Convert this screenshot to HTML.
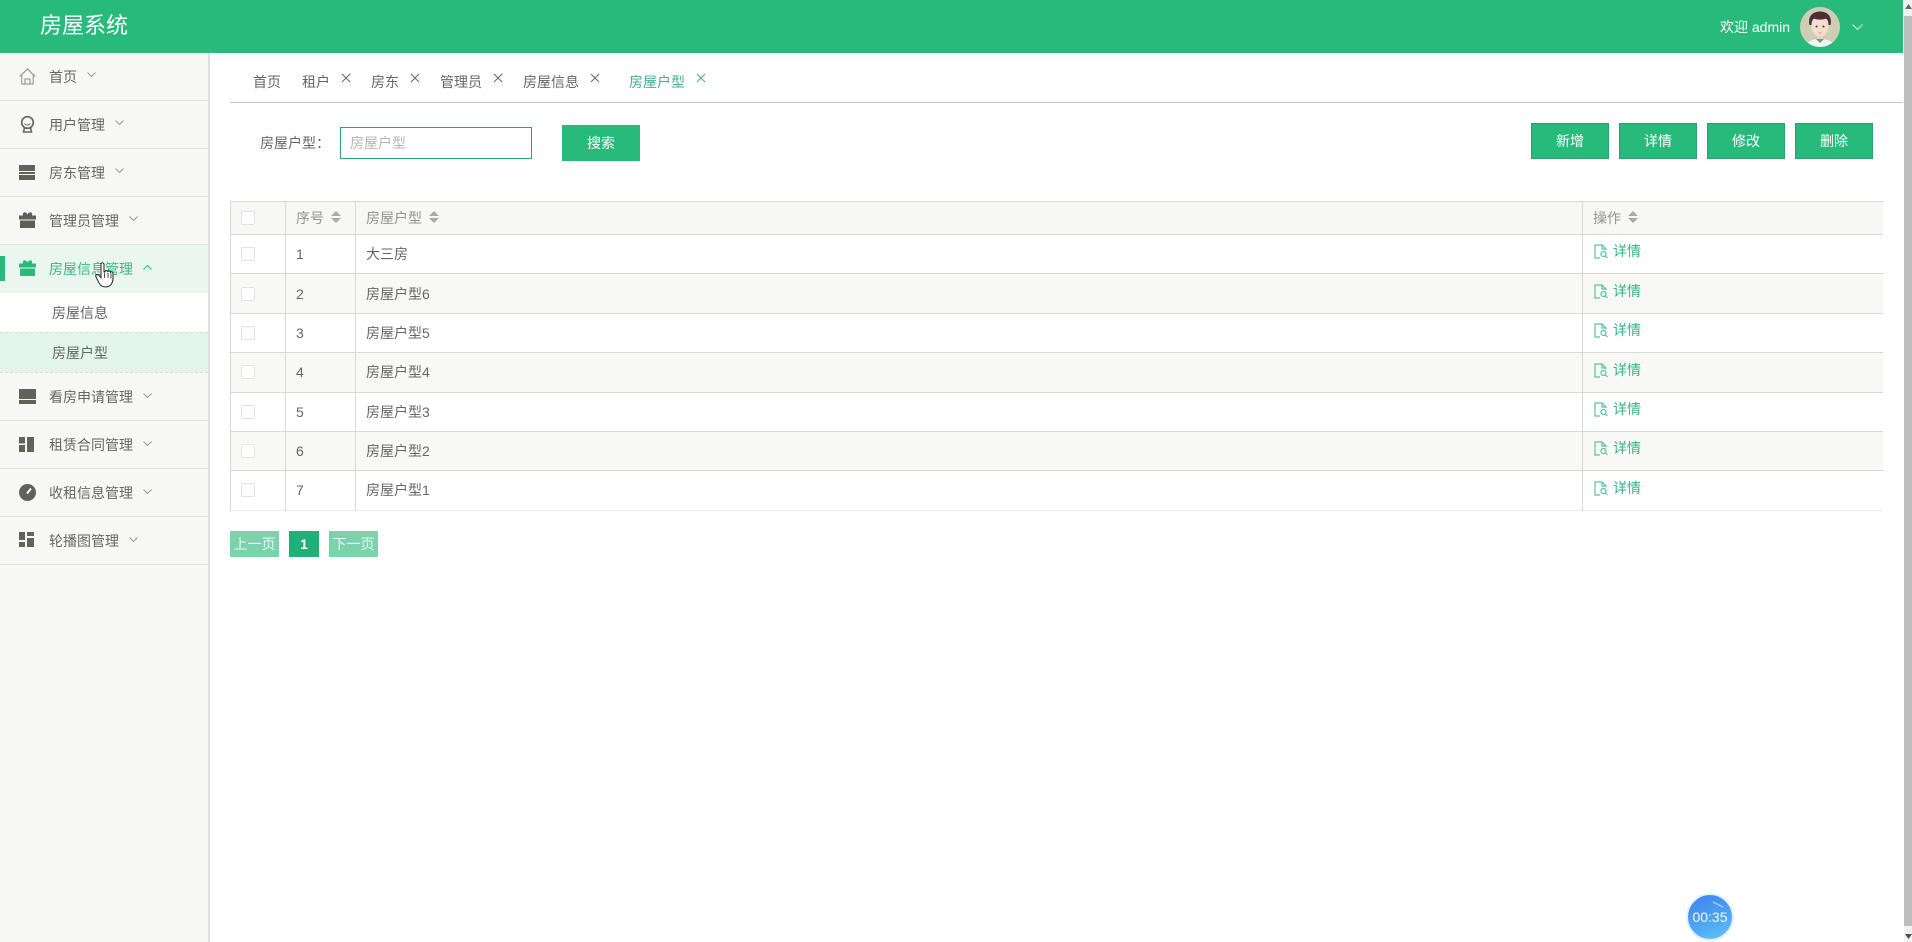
<!DOCTYPE html>
<html lang="zh-CN"><head><meta charset="utf-8"><title>房屋系统</title>
<style>
*{box-sizing:border-box;margin:0;padding:0}
html,body{width:1912px;height:942px;overflow:hidden;background:#fff}
body{font-family:"Liberation Sans","Noto Sans CJK SC",sans-serif;font-size:14px;color:#666;position:relative}
.a{position:absolute;white-space:nowrap}
.t{position:absolute;white-space:nowrap;line-height:20px;height:20px}
.head{left:0;top:0;width:1903px;height:53px;background:#28ba7b}
.side{left:0;top:53px;width:210px;height:889px;background:#f7f7f5;border-right:2px solid #ddd}
.sep{position:absolute;left:0;width:208px;height:1px;background:#e2e2e0}
.hl{position:absolute;height:1px;background:#d8d8d8}
.vl{position:absolute;width:1px;background:#d8d8d8;top:201px;height:310px}
.cb{position:absolute;left:241px;width:14px;height:14px;border:1px solid #e2e2e2;border-radius:2px;background:#fff}
.btn{position:absolute;top:123px;width:78px;height:36px;background:#28ba7b;border:1px solid #2a9f73;color:#fff;text-align:center;line-height:34px}
.op{color:#36b286}
svg{position:absolute;overflow:visible}
</style></head><body>
<div class="a head"></div>
<div class="t" style="left:40px;top:11px;font-size:22px;line-height:30px;height:30px;color:#fff">房屋系统</div>
<div class="t" style="left:1720px;top:17px;color:#fff">欢迎 admin</div>
<svg style="left:1800px;top:7px" width="40" height="40" viewBox="0 0 40 40">
<defs><clipPath id="c"><circle cx="20" cy="20" r="20"/></clipPath></defs>
<g clip-path="url(#c)"><rect width="40" height="40" fill="#cfcdb4"/>
<path d="M5 40c1-6 9-8 15-8s14 2 15 8z" fill="#eef6f1"/>
<path d="M16 32l4 4 4-4-4-2z" fill="#6f9a86"/>
<rect x="17" y="25" width="6" height="7" fill="#eccfbe"/>
<ellipse cx="20" cy="19" rx="8.500" ry="10.500" fill="#f4dccf"/>
<path d="M9.500 18C7.500 9 13 4.500 20 4.500S32.500 9 30.500 18l-2 0c0-3-.5-5-2.500-6.500-3 1.500-9 1.500-12 0-2 1.500-2.500 3.500-2.500 6.500z" fill="#4a2f37"/>
<circle cx="16.500" cy="19.500" r="1" fill="#4a2f37"/><circle cx="23.500" cy="19.500" r="1" fill="#4a2f37"/>
<path d="M18.500 26h3" stroke="#d98f8f" stroke-width="1"/></g></svg>
<svg style="left:1852px;top:24px" width="11" height="6" viewBox="0 0 11 6"><path d="M.5.500l5 5 5-5" fill="none" stroke="#d7f2e5" stroke-width="1"/></svg>

<div class="a side"></div>
<div class="sep" style="top:100px"></div><div class="sep" style="top:148px"></div><div class="sep" style="top:196px"></div><div class="sep" style="top:244px"></div>
<div class="a" style="left:0;top:245px;width:208px;height:48px;background:#ebf6f1"></div>
<div class="a" style="left:0;top:256px;width:5px;height:25px;background:#28ba7b"></div>
<div class="a" style="left:0;top:293px;width:208px;height:39px;background:#fff"></div>
<div class="a" style="left:0;top:333px;width:208px;height:39px;background:#e2f4ec"></div>
<div class="a" style="left:0;top:332px;width:208px;border-top:1px dashed #cfe3da"></div>
<div class="a" style="left:0;top:372px;width:208px;border-top:1px dashed #cfe3da"></div>
<div class="sep" style="top:420px"></div><div class="sep" style="top:468px"></div><div class="sep" style="top:516px"></div><div class="sep" style="top:564px"></div>

<div class="t" style="left:49px;top:67px">首页</div>
<div class="t" style="left:49px;top:115px">用户管理</div>
<div class="t" style="left:49px;top:163px">房东管理</div>
<div class="t" style="left:49px;top:211px">管理员管理</div>
<div class="t" style="left:49px;top:259px;color:#36b882">房屋信息管理</div>
<div class="t" style="left:52px;top:303px">房屋信息</div>
<div class="t" style="left:52px;top:343px">房屋户型</div>
<div class="t" style="left:49px;top:387px">看房申请管理</div>
<div class="t" style="left:49px;top:435px">租赁合同管理</div>
<div class="t" style="left:49px;top:483px">收租信息管理</div>
<div class="t" style="left:49px;top:531px">轮播图管理</div>

<!-- chevrons -->
<svg style="left:87px;top:72px" width="9" height="5" viewBox="0 0 9 5"><path d="M.5.500l4 4 4-4" fill="none" stroke="#999"/></svg>
<svg style="left:115px;top:120px" width="9" height="5" viewBox="0 0 9 5"><path d="M.5.500l4 4 4-4" fill="none" stroke="#999"/></svg>
<svg style="left:115px;top:168px" width="9" height="5" viewBox="0 0 9 5"><path d="M.5.500l4 4 4-4" fill="none" stroke="#999"/></svg>
<svg style="left:129px;top:216px" width="9" height="5" viewBox="0 0 9 5"><path d="M.5.500l4 4 4-4" fill="none" stroke="#999"/></svg>
<svg style="left:143px;top:265px" width="9" height="5" viewBox="0 0 9 5"><path d="M.5 4.500l4-4 4 4" fill="none" stroke="#36b882"/></svg>
<svg style="left:143px;top:393px" width="9" height="5" viewBox="0 0 9 5"><path d="M.5.500l4 4 4-4" fill="none" stroke="#999"/></svg>
<svg style="left:143px;top:441px" width="9" height="5" viewBox="0 0 9 5"><path d="M.5.500l4 4 4-4" fill="none" stroke="#999"/></svg>
<svg style="left:143px;top:489px" width="9" height="5" viewBox="0 0 9 5"><path d="M.5.500l4 4 4-4" fill="none" stroke="#999"/></svg>
<svg style="left:129px;top:537px" width="9" height="5" viewBox="0 0 9 5"><path d="M.5.500l4 4 4-4" fill="none" stroke="#999"/></svg>

<!-- menu icons -->
<svg style="left:19px;top:68px" width="17" height="17" viewBox="0 0 17 17"><path d="M.8 8.500L8.500 1l7.700 7.500M2.800 7.500V16h11.400V7.500M6 16v-5h5v5" fill="none" stroke="#888" stroke-width="1"/></svg>
<svg style="left:20px;top:116px" width="15" height="17" viewBox="0 0 15 17"><circle cx="7.500" cy="6.500" r="5.800" fill="none" stroke="#666" stroke-width="1.700"/><path d="M4.500 7.500c1.500 2 4.500 2 6 0" fill="none" stroke="#666"/><path d="M4.500 11.500L3.500 16h8l-1-4.500" fill="none" stroke="#666" stroke-width="1.600"/></svg>
<svg style="left:19px;top:165px" width="16" height="15" viewBox="0 0 16 15"><rect width="16" height="6" fill="#62625d"/><rect y="7" width="16" height="2" fill="#62625d"/><rect y="10" width="16" height="5" fill="#62625d"/></svg>
<svg style="left:19px;top:212px" width="17" height="16" viewBox="0 0 17 16"><path d="M4 3.500C3-.5 7-.8 8.500 2.500 10-.8 14-.5 13 3.500z" fill="#5f5f5a"/><rect y="3.500" width="17" height="4" fill="#5f5f5a"/><rect x="1" y="8.500" width="15" height="7.500" fill="#5f5f5a"/></svg>
<svg style="left:19px;top:260px" width="17" height="16" viewBox="0 0 17 16"><path d="M4 3.500C3-.5 7-.8 8.500 2.500 10-.8 14-.5 13 3.500z" fill="#28ba7b"/><rect y="3.500" width="17" height="4" fill="#28ba7b"/><rect x="1" y="8.500" width="15" height="7.500" fill="#28ba7b"/></svg>
<svg style="left:19px;top:389px" width="17" height="15" viewBox="0 0 17 15"><rect width="17" height="10" fill="#62625d"/><rect y="11" width="17" height="4" fill="#62625d"/></svg>
<svg style="left:19px;top:437px" width="16" height="15" viewBox="0 0 16 15"><rect width="6" height="6.500" fill="#62625d"/><rect y="8" width="6" height="7" fill="#62625d"/><rect x="8" width="7" height="15" fill="#62625d"/></svg>
<svg style="left:19px;top:484px" width="17" height="17" viewBox="0 0 17 17"><circle cx="8.500" cy="8.500" r="8.500" fill="#62625d"/><path d="M8 9.500l4-5" stroke="#f7f7f5" stroke-width="2"/></svg>
<svg style="left:19px;top:532px" width="16" height="16" viewBox="0 0 16 16"><rect width="6" height="8" fill="#62625d"/><rect y="10" width="6" height="5" fill="#62625d"/><rect x="8" width="7" height="4" fill="#62625d"/><rect x="8" y="6" width="7" height="9" fill="#62625d"/></svg>

<!-- tabs -->
<div class="t" style="left:253px;top:72px">首页</div>
<div class="t" style="left:302px;top:72px">租户</div>
<div class="t" style="left:371px;top:72px">房东</div>
<div class="t" style="left:440px;top:72px">管理员</div>
<div class="t" style="left:523px;top:72px">房屋信息</div>
<div class="t" style="left:629px;top:72px;color:#45ad8d">房屋户型</div>
<svg style="left:342px;top:74px" width="8" height="8"><path d="M0 0l8 8M8 0L0 8" stroke="#666"/></svg>
<svg style="left:411px;top:74px" width="8" height="8"><path d="M0 0l8 8M8 0L0 8" stroke="#666"/></svg>
<svg style="left:494px;top:74px" width="8" height="8"><path d="M0 0l8 8M8 0L0 8" stroke="#666"/></svg>
<svg style="left:591px;top:74px" width="8" height="8"><path d="M0 0l8 8M8 0L0 8" stroke="#666"/></svg>
<svg style="left:697px;top:74px" width="8" height="8"><path d="M0 0l8 8M8 0L0 8" stroke="#45ad8d"/></svg>
<div class="hl" style="left:230px;top:102px;width:1673px;background:#c4c4c4"></div>

<!-- search -->
<div class="t" style="left:260px;top:133px">房屋户型：</div>
<div class="a" style="left:340px;top:127px;width:192px;height:32px;border:1px solid #2f9f7c"></div>
<div class="t" style="left:350px;top:133px;color:#b5b5b5">房屋户型</div>
<div class="a" style="left:562px;top:125px;width:78px;height:36px;background:#28ba7b;color:#fff;text-align:center;line-height:36px">搜索</div>
<div class="btn" style="left:1531px">新增</div>
<div class="btn" style="left:1619px">详情</div>
<div class="btn" style="left:1707px">修改</div>
<div class="btn" style="left:1795px">删除</div>

<!-- table -->
<div class="a" style="left:230px;top:201px;width:1653px;height:33px;background:#f7f7f6"></div>
<div class="a" style="left:230px;top:274px;width:1653px;height:39px;background:#f8f8f7"></div>
<div class="a" style="left:230px;top:353px;width:1653px;height:39px;background:#f8f8f7"></div>
<div class="a" style="left:230px;top:432px;width:1653px;height:38px;background:#f8f8f7"></div>
<div class="hl" style="left:230px;top:201px;width:1653px"></div>
<div class="hl" style="left:230px;top:234px;width:1653px"></div>
<div class="hl" style="left:230px;top:273px;width:1653px"></div>
<div class="hl" style="left:230px;top:313px;width:1653px"></div>
<div class="hl" style="left:230px;top:352px;width:1653px"></div>
<div class="hl" style="left:230px;top:392px;width:1653px"></div>
<div class="hl" style="left:230px;top:431px;width:1653px"></div>
<div class="hl" style="left:230px;top:470px;width:1653px"></div>
<div class="hl" style="left:230px;top:510px;width:1653px;background:#ececec"></div>
<div class="vl" style="left:230px"></div><div class="vl" style="left:285px"></div><div class="vl" style="left:355px"></div><div class="vl" style="left:1582px"></div>

<div class="cb" style="top:211px"></div><div class="cb" style="top:247px"></div><div class="cb" style="top:287px"></div><div class="cb" style="top:326px"></div><div class="cb" style="top:365px"></div><div class="cb" style="top:405px"></div><div class="cb" style="top:444px"></div><div class="cb" style="top:483px"></div>

<div class="t" style="left:296px;top:208px;color:#939393">序号</div>
<div class="t" style="left:366px;top:208px;color:#939393">房屋户型</div>
<div class="t" style="left:1593px;top:208px;color:#939393">操作</div>
<svg style="left:331px;top:211px" width="10" height="12"><path d="M5 0l5 5H0zM0 7h10l-5 5z" fill="#aaa"/></svg>
<svg style="left:429px;top:211px" width="10" height="12"><path d="M5 0l5 5H0zM0 7h10l-5 5z" fill="#aaa"/></svg>
<svg style="left:1628px;top:211px" width="10" height="12"><path d="M5 0l5 5H0zM0 7h10l-5 5z" fill="#aaa"/></svg>

<div class="t" style="left:296px;top:244px">1</div><div class="t" style="left:366px;top:244px">大三房</div>
<div class="t" style="left:296px;top:284px">2</div><div class="t" style="left:366px;top:284px">房屋户型6</div>
<div class="t" style="left:296px;top:323px">3</div><div class="t" style="left:366px;top:323px">房屋户型5</div>
<div class="t" style="left:296px;top:362px">4</div><div class="t" style="left:366px;top:362px">房屋户型4</div>
<div class="t" style="left:296px;top:402px">5</div><div class="t" style="left:366px;top:402px">房屋户型3</div>
<div class="t" style="left:296px;top:441px">6</div><div class="t" style="left:366px;top:441px">房屋户型2</div>
<div class="t" style="left:296px;top:480px">7</div><div class="t" style="left:366px;top:480px">房屋户型1</div>

<div class="t op" style="left:1613px;top:241px">详情</div>
<div class="t op" style="left:1613px;top:281px">详情</div>
<div class="t op" style="left:1613px;top:320px">详情</div>
<div class="t op" style="left:1613px;top:360px">详情</div>
<div class="t op" style="left:1613px;top:399px">详情</div>
<div class="t op" style="left:1613px;top:438px">详情</div>
<div class="t op" style="left:1613px;top:478px">详情</div>
<svg style="left:1594px;top:244px" width="14" height="15" viewBox="0 0 14 15"><path d="M6 14H1V1h7l4 4v1M8 1v4h4" fill="none" stroke="#5cc09d" stroke-width="1.200"/><circle cx="9.500" cy="10" r="2.500" fill="none" stroke="#5cc09d" stroke-width="1.200"/><path d="M11.500 12l2 2" stroke="#5cc09d" stroke-width="1.200"/></svg>
<svg style="left:1594px;top:284px" width="14" height="15" viewBox="0 0 14 15"><path d="M6 14H1V1h7l4 4v1M8 1v4h4" fill="none" stroke="#5cc09d" stroke-width="1.200"/><circle cx="9.500" cy="10" r="2.500" fill="none" stroke="#5cc09d" stroke-width="1.200"/><path d="M11.500 12l2 2" stroke="#5cc09d" stroke-width="1.200"/></svg>
<svg style="left:1594px;top:323px" width="14" height="15" viewBox="0 0 14 15"><path d="M6 14H1V1h7l4 4v1M8 1v4h4" fill="none" stroke="#5cc09d" stroke-width="1.200"/><circle cx="9.500" cy="10" r="2.500" fill="none" stroke="#5cc09d" stroke-width="1.200"/><path d="M11.500 12l2 2" stroke="#5cc09d" stroke-width="1.200"/></svg>
<svg style="left:1594px;top:363px" width="14" height="15" viewBox="0 0 14 15"><path d="M6 14H1V1h7l4 4v1M8 1v4h4" fill="none" stroke="#5cc09d" stroke-width="1.200"/><circle cx="9.500" cy="10" r="2.500" fill="none" stroke="#5cc09d" stroke-width="1.200"/><path d="M11.500 12l2 2" stroke="#5cc09d" stroke-width="1.200"/></svg>
<svg style="left:1594px;top:402px" width="14" height="15" viewBox="0 0 14 15"><path d="M6 14H1V1h7l4 4v1M8 1v4h4" fill="none" stroke="#5cc09d" stroke-width="1.200"/><circle cx="9.500" cy="10" r="2.500" fill="none" stroke="#5cc09d" stroke-width="1.200"/><path d="M11.500 12l2 2" stroke="#5cc09d" stroke-width="1.200"/></svg>
<svg style="left:1594px;top:441px" width="14" height="15" viewBox="0 0 14 15"><path d="M6 14H1V1h7l4 4v1M8 1v4h4" fill="none" stroke="#5cc09d" stroke-width="1.200"/><circle cx="9.500" cy="10" r="2.500" fill="none" stroke="#5cc09d" stroke-width="1.200"/><path d="M11.500 12l2 2" stroke="#5cc09d" stroke-width="1.200"/></svg>
<svg style="left:1594px;top:481px" width="14" height="15" viewBox="0 0 14 15"><path d="M6 14H1V1h7l4 4v1M8 1v4h4" fill="none" stroke="#5cc09d" stroke-width="1.200"/><circle cx="9.500" cy="10" r="2.500" fill="none" stroke="#5cc09d" stroke-width="1.200"/><path d="M11.500 12l2 2" stroke="#5cc09d" stroke-width="1.200"/></svg>

<!-- pagination -->
<div class="a" style="left:230px;top:531px;width:49px;height:26px;background:#7dd2ae;color:#e9f8f1;text-align:center;line-height:26px">上一页</div>
<div class="a" style="left:289px;top:531px;width:30px;height:26px;background:#1fb079;color:#fff;font-weight:bold;text-align:center;line-height:26px">1</div>
<div class="a" style="left:329px;top:531px;width:49px;height:26px;background:#7dd2ae;color:#e9f8f1;text-align:center;line-height:26px">下一页</div>

<!-- cursor -->
<svg style="left:95px;top:262px" width="20" height="26" viewBox="0 0 20 26"><path d="M6 1.500c1-1 2.500-1 3 .5v8l1 0c0-2 2.500-2 2.800 0 .2-1.500 2.500-1.500 2.700.3.500-1 2.500-.8 2.500 1v5c0 4-2 8-6 8.500-4 .5-6.500-1-8-4L1 15c-1-2 1-3 2.500-2L6 15.500z" fill="#fff" stroke="#222" stroke-width="1"/><path d="M9.500 11v5M13 11v5M16 11.500v5" stroke="#222" stroke-width=".8"/></svg>

<!-- timer -->
<div class="a" style="left:1686px;top:893px;width:48px;height:48px;border-radius:50%;background:linear-gradient(160deg,#3f82ec,#4ea6f2 60%,#63c4fb);border:2px solid #e6f1fa;color:#f2f8ff;text-align:center;line-height:44px;font-size:14px">00:35</div>
<svg style="left:1713px;top:901px" width="12" height="8"><path d="M0 1l10 5" stroke="#bcd8fa" stroke-width="1"/></svg>

<!-- scrollbar -->
<div class="a" style="left:1904px;top:0;width:8px;height:942px;background:#f1f1f1"></div>
<div class="a" style="left:1904px;top:16px;width:8px;height:910px;background:#bdbdbd"></div>
<svg style="left:1905px;top:4px" width="7" height="5"><path d="M3.500 0L7 5H0z" fill="#666"/></svg>
<svg style="left:1905px;top:934px" width="7" height="5"><path d="M0 0h7L3.500 5z" fill="#505050"/></svg>
</body></html>
